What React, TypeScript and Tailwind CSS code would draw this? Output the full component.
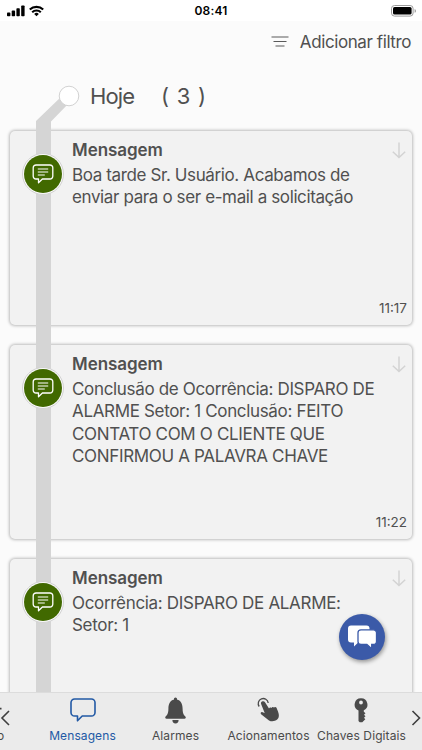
import { ReactNode } from "react";
import { IoIosNotifications } from "react-icons/io";

type Message = {
  lines: string[];
  time?: string;
  tracking: string;
};

const messages: Message[] = [
  {
    lines: [
      "Boa tarde Sr. Usuário. Acabamos de",
      "enviar para o ser e-mail a solicitação",
    ],
    time: "11:17",
    tracking: "tracking-[-0.38px]",
  },
  {
    lines: [
      "Conclusão de Ocorrência: DISPARO DE",
      "ALARME Setor: 1 Conclusão: FEITO",
      "CONTATO COM O CLIENTE QUE",
      "CONFIRMOU A PALAVRA CHAVE",
    ],
    time: "11:22",
    tracking: "tracking-[-0.335px]",
  },
  {
    lines: ["Ocorrência: DISPARO DE ALARME:", "Setor: 1"],
    tracking: "tracking-[-0.32px]",
  },
];

const StatusBar = () => (
  <div className="relative flex h-[21px] shrink-0 items-center justify-between bg-white pl-[7px] pr-[5px]">
    <div className="flex items-center gap-[4px]">
      <svg width="18" height="12" viewBox="0 0 18 12" fill="#000">
        <rect x="0" y="7.6" width="3.4" height="3.6" rx="0.8" />
        <rect x="4.7" y="5.6" width="3.4" height="5.6" rx="0.8" />
        <rect x="9.4" y="3.2" width="3.4" height="8" rx="0.8" />
        <rect x="14.2" y="0.4" width="3.4" height="10.8" rx="0.8" />
      </svg>
      <svg width="15" height="12" viewBox="0 0 15 12" fill="none" stroke="#000" strokeWidth="2.1">
        <path d="M0.8 4.6a9.6 9.6 0 0 1 13.4 0" />
        <path d="M3.2 7.2a6.1 6.1 0 0 1 8.6 0" />
        <path d="M7.5 11.2 5.2 8.9a3.3 3.3 0 0 1 4.6 0z" fill="#000" stroke="none" />
      </svg>
    </div>
    <span className="absolute inset-x-0 text-center text-[12px] font-semibold leading-[22px] tracking-[0.2px] text-black">
      08:41
    </span>
    <svg width="26" height="12" viewBox="0 0 26 12">
      <rect x="0.5" y="0.5" width="21.6" height="10.6" rx="3" fill="#fff" stroke="#9b9b9b" />
      <rect x="2" y="2" width="18.6" height="7.6" rx="1.6" fill="#000" />
      <path d="M23.6 4v3.8a2 2 0 0 0 0-3.8z" fill="#9b9b9b" />
    </svg>
  </div>
);

const MessageCard = ({ lines, time, tracking }: Message) => (
  <div className="relative h-[194px] shrink-0 rounded-[5px] bg-[#f2f2f2] shadow-[0_0_3px_1px_rgba(0,0,0,0.25)]">
    <div className="flex flex-col pl-[62px] pt-[7px] text-[#505050]">
      <h2 className="text-[17px] font-semibold leading-[24px] tracking-[-0.05px]">Mensagem</h2>
      <p className={`mt-[2px] whitespace-nowrap text-[17px] leading-[22.4px] ${tracking}`}>
        {lines.map((line) => (
          <span key={line} className="block">
            {line}
          </span>
        ))}
      </p>
    </div>
    <svg
      className="absolute right-[6px] top-[11px]"
      width="14"
      height="17"
      viewBox="0 0 14 17"
      fill="none"
      stroke="#d3d3d3"
      strokeWidth="1.5"
    >
      <path d="M7 0.5v15M0.8 9.7 7 15.500l6.200-5.800" />
    </svg>
    {time && (
      <span className="absolute bottom-[7px] right-[5px] text-[13.5px] leading-[20px] text-[#505050]">
        {time}
      </span>
    )}
  </div>
);

const Badge = () => (
  <div className="flex size-[42px] shrink-0 items-center justify-center rounded-full border border-[#d2d2d2] bg-[#fafafa]">
    <div className="flex size-[38px] items-center justify-center rounded-full bg-[#416900]">
      <svg width="22" height="20" viewBox="0 0 22 20" fill="none" stroke="#fff" strokeWidth="1.3" strokeLinejoin="round">
        <path d="M4 1h14a2.8 2.8 0 0 1 2.8 2.8v8.4A2.8 2.8 0 0 1 18 15h-7.6l-3.9 3.7V15H4a2.8 2.8 0 0 1-2.8-2.8V3.8A2.8 2.8 0 0 1 4 1z" />
        <path d="M5.8 5h10.4M5.8 8h10.4M5.8 11h7" strokeWidth="1.2" />
      </svg>
    </div>
  </div>
);

const Tab = ({
  label,
  active,
  children,
}: {
  label: string;
  active?: boolean;
  children: ReactNode;
}) => (
  <div
    className={`flex w-[93px] shrink-0 flex-col items-center ${
      active ? "text-[#2259a5]" : "text-[#4a4a4a]"
    }`}
  >
    <div className="flex h-[26px] items-center justify-center">{children}</div>
    <span className="mt-[5px] whitespace-nowrap text-[12px] leading-[15px] tracking-[0.1px]">
      {label}
    </span>
  </div>
);

const App = () => {
  return (
    <div className="relative flex h-[750px] w-[422px] flex-col overflow-hidden bg-[#fbfbfb] font-[Inter,sans-serif]">
      <StatusBar />
      <div className="flex h-[41px] shrink-0 items-center justify-end gap-[11px] pr-[11px] text-[#505050]">
        <svg width="18" height="12" viewBox="0 0 18 12" stroke="#5a5a5a" strokeWidth="1.2">
          <path d="M0.5 1h17M2.5 5.5h13M4.5 10h9" />
        </svg>
        <span className="text-[17px] leading-[22px] tracking-[-0.41px]">Adicionar filtro</span>
      </div>

      <div className="relative flex min-h-0 flex-1 flex-col overflow-hidden">
        <div className="flex h-[69px] shrink-0 items-center gap-[27px] pb-[2px] pl-[90px] text-[22px] leading-[26px] text-[#505050]">
          <span className="tracking-[-0.9px]">Hoje</span>
          <span className="tracking-[0.7px]">( 3 )</span>
        </div>
        <div className="flex flex-col gap-[20px] pl-[10px] pr-[10px]">
          {messages.map((message) => (
            <MessageCard key={message.lines[0]} {...message} />
          ))}
        </div>
        {/* timeline rail over the cards */}
        <svg className="absolute left-0 top-0" width="90" height="632" viewBox="0 0 90 632">
          <path d="M36 632V59L62 34l7 7-18 18.5V632z" fill="#d5d5d5" />
          <circle cx="69" cy="34" r="9.8" fill="#fff" stroke="#d2d2d2" />
        </svg>
        <div className="absolute left-[22px] top-[91px] flex flex-col gap-[172px]">
          {messages.map((message) => (
            <Badge key={message.lines[0]} />
          ))}
        </div>
      </div>

      <button
        type="button"
        aria-label="Chat"
        className="absolute left-[339px] top-[614px] flex size-[46px] items-center justify-center rounded-full bg-[#3b5aa8] shadow-[1px_2px_4px_rgba(0,0,0,0.4)]"
      >
        <svg width="30" height="24" viewBox="0 0 30 24" fill="#fff">
          <path d="M4 0.5h15.5a3 3 0 0 1 3 3v11a3 3 0 0 1-3 3H11.2L7 21.6v-4.1H4a3 3 0 0 1-3-3v-11a3 3 0 0 1 3-3z" />
          <path
            d="M14 4.8h12.5a3 3 0 0 1 3 3v8.7a3 3 0 0 1-3 3H24.7v4.2l-4.8-4.2H14a3 3 0 0 1-3-3V7.8a3 3 0 0 1 3-3z"
            stroke="#3b5aa8"
            strokeWidth="1.3"
          />
        </svg>
      </button>

      <div className="relative flex h-[58px] shrink-0 items-start overflow-hidden border-t border-[#dcdcdc] bg-[#ebebeb] pl-[36px] pt-[4px]">
        <Tab label="Mensagens" active>
          <svg width="26" height="24" viewBox="0 0 26 24" fill="none" stroke="currentColor" strokeWidth="1.6" strokeLinejoin="round">
            <path d="M4.6 1h16.8a3.6 3.6 0 0 1 3.6 3.6v9.8a3.6 3.6 0 0 1-3.6 3.6H12.2L7.5 22.8V18H4.6A3.6 3.6 0 0 1 1 14.4V4.6A3.6 3.6 0 0 1 4.6 1z" />
          </svg>
        </Tab>
        <Tab label="Alarmes">
          <IoIosNotifications size={33} />
        </Tab>
        <Tab label="Acionamentos">
          <svg width="24" height="26" viewBox="0 0 24 26" fill="currentColor">
            <path d="M2.2 9.5A5 5 0 1 1 11.2 6" fill="none" stroke="currentColor" strokeWidth="1.3" />
            <path d="M5 4.6c1.100-.7 2.400-.3 3 .7l4 6.100c.4-1 1.600-1.300 2.500-.5.500-1 1.700-1.100 2.500-.3.600-.9 1.900-.8 2.500.2l1.600 4c1.100 2.900 1.300 6-.9 7.800-2.300 1.900-5.700 2.300-8.200.9l-7.600-5.900c-1.500-1.200-.4-2.900 1.100-2.400l2.200.9L4.300 7.400c-.6-1-.4-2.200.7-2.800z" />
          </svg>
        </Tab>
        <Tab label="Chaves Digitais">
          <svg className="-ml-[2px]" width="14" height="25" viewBox="0 0 14 25" fill="currentColor">
            <path
              fillRule="evenodd"
              d="M7 0.3a6.3 6.3 0 0 1 2.8 12v1.4l1.7 1.5-1.5 1.5 1.5 1.6-1.5 1.5 1.3 1.5-3 3H5.7L4.5 22.9V12.4A6.3 6.3 0 0 1 7 .3zm0 2.3a1.9 1.9 0 1 0 0 3.8 1.9 1.9 0 0 0 0-3.8z"
            />
          </svg>
        </Tab>
        {/* previous tab, scrolled out to the left */}
        <span className="absolute left-[-3px] top-[35px] text-[12px] leading-[15px] text-[#4a4a4a]">o</span>
        <svg className="absolute left-0 top-[14px]" width="11" height="20" viewBox="0 0 11 20" fill="none" stroke="#3f3f3f" strokeWidth="1.6">
          <path d="M0 1.6h1.500" />
          <path d="M9 4 2 11l7 7" />
        </svg>
        <svg className="absolute right-0 top-[16px]" width="11" height="18" viewBox="0 0 11 18" fill="none" stroke="#3f3f3f" strokeWidth="1.6">
          <path d="M1.500 2 8.500 9l-7 7" />
        </svg>
      </div>
    </div>
  );
};

export default App;
